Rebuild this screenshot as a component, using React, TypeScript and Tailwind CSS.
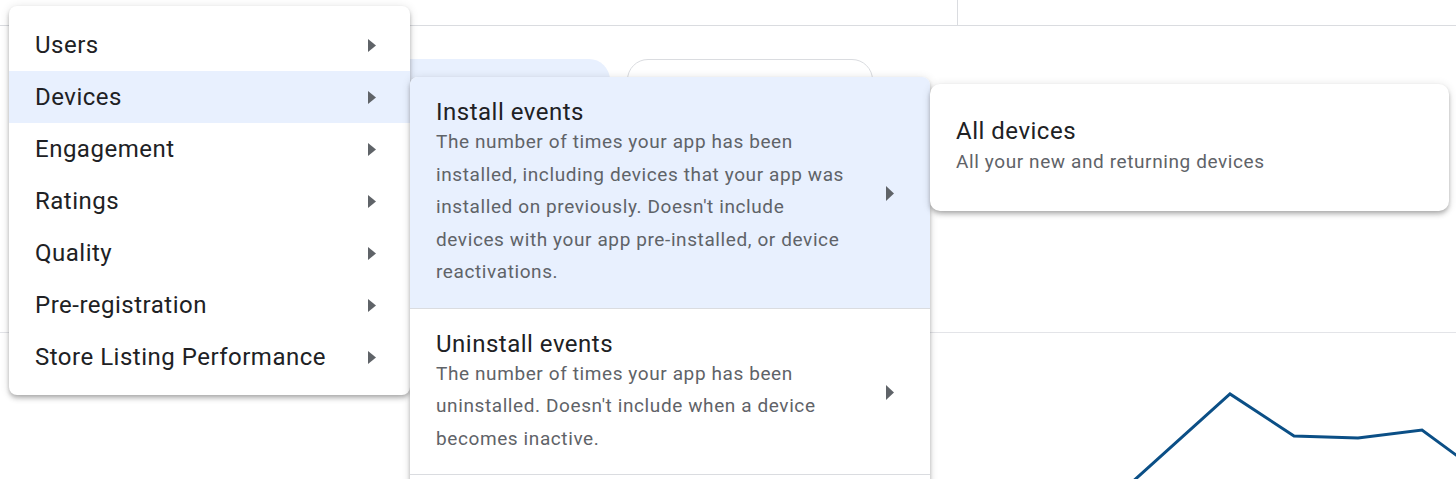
import type { ReactNode } from 'react'

const categories = [
  'Users',
  'Devices',
  'Engagement',
  'Ratings',
  'Quality',
  'Pre-registration',
  'Store Listing Performance',
]

const metrics = [
  {
    title: 'Install events',
    body: "The number of times your app has been installed, including devices that your app was installed on previously. Doesn't include devices with your app pre-installed, or device reactivations.",
    active: true,
  },
  {
    title: 'Uninstall events',
    body: "The number of times your app has been uninstalled. Doesn't include when a device becomes inactive.",
    active: false,
  },
]

function Caret({ h = 13 }: { h?: number }) {
  return (
    <svg width="8" height={h} viewBox={`0 0 8 ${h}`} className="shrink-0 fill-[#5f6368]">
      <polygon points={`0,0 8,${h / 2} 0,${h}`} />
    </svg>
  )
}

function Chip({ className, children }: { className: string; children: ReactNode }) {
  return (
    <div className={`flex h-[42px] items-center gap-2 rounded-full px-5 pt-[9px] text-[16px] text-[#202124] ${className}`}>
      {children}
    </div>
  )
}

const shadow =
  'shadow-[0_2px_4px_-1px_rgba(0,0,0,0.2),0_4px_5px_0_rgba(0,0,0,0.14),0_1px_10px_0_rgba(0,0,0,0.12)]'

export default function App() {
  return (
    <div className="relative h-[479px] w-[1456px] overflow-hidden bg-white font-['Roboto',sans-serif]">
      {/* page behind the menus */}
      <div className="flex h-[26px] border-b border-[#dadce0]">
        <div className="w-[958px] border-r border-[#dadce0]" />
      </div>
      <div className="mt-[33px] flex gap-[17px] pl-[380px]">
        <Chip className="w-[230px] bg-[#e8f0fe]">Devices: Install events</Chip>
        <Chip className="w-[246px] border border-[#dadce0]">
          <span className="h-4 w-[3px] bg-[#1a73e8]" />
          Lifetime · All countries
        </Chip>
      </div>
      <div className="mt-[231px] border-t border-[#e3e4e8]">
        <svg width="1456" height="146" className="block">
          <polyline
            points="1100,178 1230,61 1294,103 1358,105 1422,97 1490,147"
            fill="none"
            stroke="#0b4f86"
            strokeWidth="3"
            strokeLinejoin="miter"
          />
        </svg>
      </div>

      {/* category menu */}
      <div className={`absolute left-[9px] top-[6px] z-10 w-[401px] rounded-lg bg-white pb-3 pt-[13px] ${shadow}`}>
        {categories.map((c) => (
          <div
            key={c}
            className={`flex h-[52px] items-center justify-between pl-[26px] pr-[34px] text-[24px] tracking-[0.5px] text-[#202124] ${
              c === 'Devices' ? 'bg-[#e8f0fe]' : ''
            }`}
          >
            <span>{c}</span>
            <Caret />
          </div>
        ))}
      </div>

      {/* metric submenu */}
      <div className={`absolute left-[410px] top-[77px] z-20 h-[430px] w-[520px] overflow-hidden rounded-lg bg-white ${shadow}`}>
        {metrics.map((m) => (
          <div
            key={m.title}
            className={`flex items-center border-b border-[#dadce0] pb-[19px] pl-[26px] pr-[36px] pt-[21px] ${
              m.active ? 'bg-[#e8f0fe]' : ''
            }`}
          >
            <div className="w-[414px]">
              <div className="text-[24px] leading-[28px] tracking-[0.5px] text-[#202124]">{m.title}</div>
              <div className="text-[19px] leading-[32.5px] tracking-[0.6px] text-[#5f6368]">{m.body}</div>
            </div>
            <div className="ml-auto">
              <Caret h={15} />
            </div>
          </div>
        ))}
      </div>

      {/* breakdown submenu */}
      <div className={`absolute left-[930px] top-[84px] z-30 w-[519px] rounded-[10px] bg-white pb-8 pl-[26px] pt-[33px] ${shadow}`}>
        <div className="text-[24px] leading-[28px] tracking-[0.5px] text-[#202124]">All devices</div>
        <div className="text-[19px] leading-[34px] tracking-[0.6px] text-[#5f6368]">All your new and returning devices</div>
      </div>
    </div>
  )
}
